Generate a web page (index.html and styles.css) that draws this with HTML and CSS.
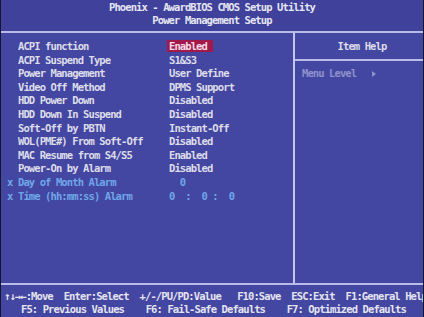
FILE: index.html
```html
<!DOCTYPE html>
<html>
<head>
<meta charset="utf-8">
<link rel="stylesheet" href="styles.css">
</head>
<body>
<div class="screen">
  <header class="title">
    <div class="t">Phoenix - AwardBIOS CMOS Setup Utility</div>
    <div class="t">Power Management Setup</div>
  </header>
  <div class="main">
    <section class="items">
      <div class="row"><span class="mark"></span><span class="label">ACPI function</span><span class="value"><span class="sel">Enabled</span></span></div>
      <div class="row"><span class="mark"></span><span class="label">ACPI Suspend Type</span><span class="value">S1&amp;S3</span></div>
      <div class="row"><span class="mark"></span><span class="label">Power Management</span><span class="value">User Define</span></div>
      <div class="row"><span class="mark"></span><span class="label">Video Off Method</span><span class="value">DPMS Support</span></div>
      <div class="row"><span class="mark"></span><span class="label">HDD Power Down</span><span class="value">Disabled</span></div>
      <div class="row"><span class="mark"></span><span class="label">HDD Down In Suspend</span><span class="value">Disabled</span></div>
      <div class="row"><span class="mark"></span><span class="label">Soft-Off by PBTN</span><span class="value">Instant-Off</span></div>
      <div class="row"><span class="mark"></span><span class="label">WOL(PME#) From Soft-Off</span><span class="value">Disabled</span></div>
      <div class="row"><span class="mark"></span><span class="label">MAC Resume from S4/S5</span><span class="value">Enabled</span></div>
      <div class="row"><span class="mark"></span><span class="label">Power-On by Alarm</span><span class="value">Disabled</span></div>
      <div class="row dim"><span class="mark">x</span><span class="label">Day of Month Alarm</span><span class="value">  0</span></div>
      <div class="row dim"><span class="mark">x</span><span class="label">Time (hh:mm:ss) Alarm</span><span class="value">0  :  0 :  0</span></div>
    </section>
    <aside class="help">
      <div class="help-head">Item Help</div>
      <div class="help-body">Menu Level   <span class="arrow"></span></div>
    </aside>
  </div>
  <footer class="keys">
    <div class="k1">↑↓→←:Move  Enter:Select  +/-/PU/PD:Value   F10:Save  ESC:Exit  F1:General Help</div>
    <div class="k2">F5: Previous Values    F6: Fail-Safe Defaults    F7: Optimized Defaults</div>
  </footer>
</div>
</body>
</html>
```
FILE: styles.css
```css
html, body {
  margin: 0;
  padding: 0;
  background: #0c0c20;
}
body {
  width: 424px;
  height: 317px;
  overflow: hidden;
}
.screen {
  box-sizing: border-box;
  width: 424px;
  height: 317px;
  margin: 0;
  border-left: 1px solid #15152e;
  border-right: 1px solid #15152e;
  background: #4447a1;
  font-family: "DejaVu Sans Mono", "Liberation Mono", monospace;
  font-weight: bold;
  font-size: 10.5px;
  letter-spacing: -0.9px;
  color: #dcdcea;
  display: flex;
  flex-direction: column;
  overflow: hidden;
}
.t, .mark, .label, .value, .help-head, .help-body, .k1, .k2 {
  white-space: pre;
}
.title {
  height: 33px;
  flex: none;
  box-sizing: border-box;
  padding-top: 1px;
  background: #3f419b;
  text-align: center;
  line-height: 13px;
  color: #e6e6f2;
  border-bottom: 2px solid #b9bbea;
}
.title .t {
  height: 13px;
}
.main {
  height: 252px;
  flex: none;
  box-sizing: border-box;
  display: flex;
  border-bottom: 2px solid #b9bbea;
}
.items {
  width: 292px;
  flex: none;
  padding-top: 7px;
  box-sizing: border-box;
}
.row {
  display: flex;
  height: 13.6px;
  line-height: 13.6px;
  padding-left: 6px;
}
.mark {
  width: 11px;
  flex: none;
}
.label {
  width: 151px;
  flex: none;
}
.value {
  flex: none;
}
.sel {
  display: inline-block;
  background: #a3194b;
  color: #f3dde6;
  line-height: 12px;
  padding: 0 6px 0 2px;
  margin-left: -2px;
}
.dim {
  color: #6fa6e8;
}
.help {
  flex: 1;
  border-left: 2px solid #c4c6f0;
}
.help-head {
  height: 26px;
  line-height: 26px;
  text-align: center;
  padding-left: 6px;
  border-bottom: 2px solid #b9bbea;
}
.help-body {
  padding: 6px 0 0 7px;
  line-height: 13.6px;
  color: #8f92cc;
}
.arrow {
  display: inline-block;
  width: 0;
  height: 0;
  border-left: 4px solid #8f92cc;
  border-top: 3px solid transparent;
  border-bottom: 3px solid transparent;
  vertical-align: 0px;
}
.keys {
  flex: none;
  padding-top: 5px;
  line-height: 13px;
  color: #e4e4f0;
}
.k1 {
  padding-left: 3px;
}
.k2 {
  padding-left: 20px;
}
```
